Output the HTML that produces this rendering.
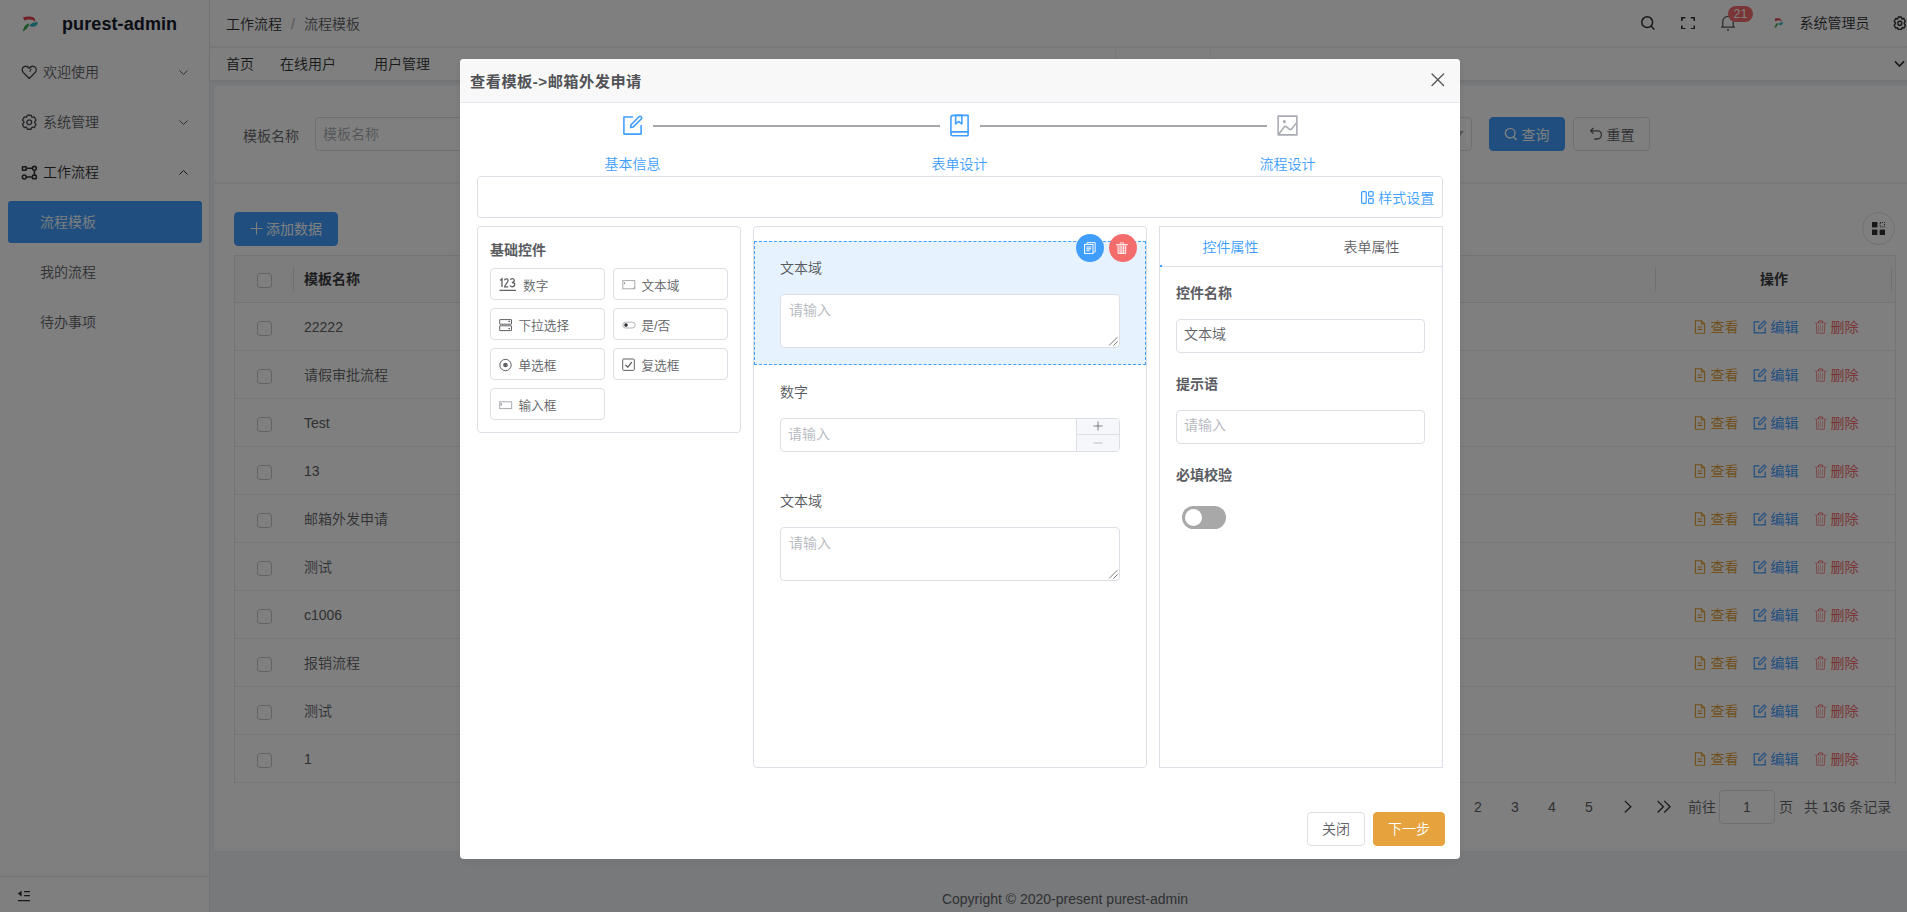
<!DOCTYPE html>
<html lang="zh-CN">
<head>
<meta charset="utf-8">
<title>purest-admin</title>
<style>
*{box-sizing:border-box;margin:0;padding:0}
html,body{width:1907px;height:912px;overflow:hidden;background:#f0f2f5}
body{font-family:"Liberation Sans","Noto Sans CJK SC",sans-serif;font-weight:350;font-size:14px;color:#303133;position:relative}
.abs{position:absolute}
svg{display:block}
/* ---------- sidebar ---------- */
#side{position:absolute;left:0;top:0;width:210px;height:912px;background:#fff;border-right:1px solid #e4e7ed}
#logo{position:absolute;left:0;top:0;width:210px;height:48px}
#logo .t{position:absolute;left:62px;top:12px;font-size:18px;font-weight:bold;color:#161a2c;letter-spacing:0.1px;line-height:24px}
.mi{position:absolute;left:0;width:210px;height:50px;line-height:50px;font-size:14px;color:#606266}
.mi .ic{position:absolute;left:21px;top:16.5px;width:16.5px;height:16.5px}
.mi .tx{position:absolute;left:43px;top:0}
.mi .ar{position:absolute;left:177.7px;top:19.6px;width:11px;height:11px}
.smi{position:absolute;left:40px;font-size:14px;color:#606266;line-height:20px}
#act{position:absolute;left:8px;top:201px;width:194px;height:42px;background:#409eff;border-radius:3px}
#collapse{position:absolute;left:0;top:876px;width:209px;height:36px;border-top:1px solid #e4e8f0;box-shadow:0 -1px 2px rgba(0,30,90,.04)}
/* ---------- header ---------- */
#hdr{position:absolute;left:210px;top:0;width:1697px;height:47px;background:#fff;border-bottom:1px solid #eeeeef}
#bc{position:absolute;left:16px;top:14px;font-size:14px;line-height:20px;color:#303133}
#bc .s{color:#a8abb2;margin:0 9px 0 9px}
#bc .l{color:#606266}
#tabs{position:absolute;left:210px;top:48px;width:1697px;height:33px;background:#fff;border-bottom:1px solid #e6e8ee;box-shadow:0 1px 2px rgba(0,20,60,.06)}
#tabs span{position:absolute;top:6px;font-size:14px;line-height:20px;color:#303133;white-space:nowrap}
/* ---------- cards ---------- */
.card{position:absolute;background:#fff;border-radius:4px}
.card>.in{position:absolute;left:0;width:1700px;height:0}
.btn{position:absolute;height:33px;border-radius:4px;font-size:14px;line-height:31px;border:1px solid #dcdfe6;background:#fff;color:#606266;white-space:nowrap}
.btn.pri{background:#409eff;border-color:#409eff;color:#fff;font-weight:400}
.cb{position:absolute;width:15px;height:15px;border:1px solid #c4c8d0;border-radius:3px;background:#fff}
.row{position:absolute;left:0;width:1660px;height:48px;border-bottom:1px solid #ececee}
.row .nm{position:absolute;left:69px;top:14px;line-height:20px;font-size:14px;color:#606266}
.row .cb{left:21.5px;top:18px}
.ops{position:absolute;left:1457.5px;top:14px;height:20px;font-size:14px;line-height:20px;white-space:nowrap}
.ops i{position:absolute;top:3px;width:14px;height:14px;font-style:normal}
.ops b{position:absolute;top:0;font-weight:normal}
.c-w{color:#e6a23c}.c-p{color:#409eff}.c-d{color:#f56c6c}
#pg{position:absolute;font-size:14px;color:#606266}
#pg span{position:absolute;top:0;line-height:20px;white-space:nowrap}
#foot{position:absolute;left:210px;top:890px;width:1710px;text-align:center;font-size:14px;color:#606368;line-height:18px}
#mask{position:absolute;left:0;top:0;width:1907px;height:912px;background:rgba(0,0,0,.5)}
#dlg{position:absolute;left:460px;top:59px;width:1000px;height:800px;background:#fff;border-radius:4px;box-shadow:0 2px 8px rgba(0,0,0,.06)}
#dh{position:absolute;left:0;top:0;width:1000px;height:44px;background:#f8f8f8;border-bottom:1px solid #e3e6ee;border-radius:4px 4px 0 0}
#dh .t{position:absolute;left:10px;top:12px;font-size:15.2px;font-weight:bold;color:#505256;line-height:22px;letter-spacing:.5px}
.st{position:absolute;top:96px;margin-left:.4px;width:120px;text-align:center;font-size:14px;line-height:18px;color:#409eff}
.ln{position:absolute;top:66px;height:2px;background:#a4a7ae}
.box{position:absolute;border:1px solid #dcdfe6;border-radius:4px;background:#fff}
.wi{position:absolute;width:115px;height:32px;border:1px solid #dcdfe6;border-radius:4px;font-size:12.7px;color:#606266;line-height:29px}
.wi svg{position:absolute;left:8px;top:9px}
.wi span{position:absolute;left:27.4px;top:2.5px;white-space:nowrap}
.fl{position:absolute;font-size:14px;color:#56585c;line-height:18px;white-space:nowrap}
.ph{position:absolute;font-size:14px;color:#b4b7bd;margin-top:.3px;line-height:18px;white-space:nowrap}
.lb{position:absolute;font-size:14px;font-weight:bold;color:#5a5c61;line-height:18px;white-space:nowrap}
.inp{position:absolute;border:1px solid #dcdfe6;border-radius:4px;background:#fff}
</style>
</head>
<body>
<!-- ================= SIDEBAR ================= -->
<div id="side">
  <div id="logo">
    <svg class="abs" style="left:22px;top:16px" width="17" height="16" viewBox="0 0 17 16">
      <path d="M1 1.2 C5 0.2 9.5 0.2 11.6 1.6 C13.2 2.8 13.6 4.6 13.2 6.2 C12.4 4.2 10 3.4 6.8 3.6 C5 3.8 3.2 4.2 2.2 4.6 Z" fill="#e0474c"/>
      <path d="M7.2 9.6 C9.2 7 12.6 5.8 16 6.4 C15.6 8.8 13.6 10.6 11 10.8 C9.6 10.9 8.2 10.4 7.2 9.6 Z" fill="#2fb4c4"/>
      <path d="M1 15.4 C1.2 11.6 3.2 8.4 7.4 7.2 C6.8 10.4 5 13.6 1 15.4 Z" fill="#3faa4d"/>
    </svg>
    <div class="t">purest-admin</div>
  </div>
  <div class="mi" style="top:47px">
    <svg class="ic" viewBox="0 0 16 16" fill="none" stroke="#4a4d55" stroke-width="1.3" stroke-linejoin="round"><path d="M8 14 L2.2 8.2 C0.6 6.4 1 3.6 3 2.6 C4.8 1.8 6.8 2.4 8 4.2 C9.2 2.4 11.2 1.8 13 2.6 C15 3.6 15.4 6.4 13.8 8.2 Z"/><path d="M10 4.6 C9.2 5.6 8.8 6.4 8.6 7.6" stroke-width="1"/></svg>
    <span class="tx">欢迎使用</span>
    <svg class="ar" viewBox="0 0 11 11" fill="none" stroke="#606266" stroke-width="1"><path d="M1.5 3.5 L5.5 7.5 L9.5 3.5"/></svg>
  </div>
  <div class="mi" style="top:97px">
    <svg class="ic" viewBox="0 0 16 16" fill="none" stroke="#4a4d55" stroke-width="1.3" stroke-linejoin="round"><path d="M6.2 1.2 H9.8 L10.6 3.2 L12.8 2.8 L14.6 5.8 L13.2 7.6 V8.4 L14.6 10.2 L12.8 13.2 L10.6 12.8 L9.8 14.8 H6.2 L5.4 12.8 L3.2 13.2 L1.4 10.2 L2.8 8.4 V7.6 L1.4 5.8 L3.2 2.8 L5.4 3.2 Z"/><circle cx="8" cy="8" r="2.3"/></svg>
    <span class="tx">系统管理</span>
    <svg class="ar" viewBox="0 0 11 11" fill="none" stroke="#606266" stroke-width="1"><path d="M1.5 3.5 L5.5 7.5 L9.5 3.5"/></svg>
  </div>
  <div class="mi" style="top:147px;color:#303133">
    <svg class="ic" viewBox="0 0 16 16" fill="none" stroke="#303133" stroke-width="1.5"><rect x="1.4" y="2.6" width="3.6" height="3.4" rx=".4"/><circle cx="13" cy="4.2" r="1.9"/><circle cx="3.2" cy="12.6" r="1.9"/><rect x="11.2" y="10.9" width="3.6" height="3.4" rx=".4"/><path d="M5 4.2 H11.1 M5.1 12.6 H11.2 M13 6.1 V10.9"/></svg>
    <span class="tx">工作流程</span>
    <svg class="ar" viewBox="0 0 11 11" fill="none" stroke="#303133" stroke-width="1"><path d="M1.5 7.5 L5.5 3.5 L9.5 7.5"/></svg>
  </div>
  <div id="act"></div>
  <div class="smi" style="top:212px;color:#fff">流程模板</div>
  <div class="smi" style="top:262px">我的流程</div>
  <div class="smi" style="top:312px">待办事项</div>
  <div id="collapse">
    <svg class="abs" style="left:17px;top:13px" width="14" height="13" viewBox="0 0 14 13" fill="none" stroke="#303133" stroke-width="1.4"><path d="M7 1.6 H13 M7 5.6 H13 M1 10.6 H13"/><path d="M4.6 0.8 V6.4 L0.8 3.6 Z" fill="#303133" stroke="none"/></svg>
  </div>
</div>

<!-- ================= HEADER ================= -->
<div id="hdr">
  <div id="bc"><span>工作流程</span><span class="s">/</span><span class="l">流程模板</span></div>
  <svg class="abs" style="left:1430px;top:15px" width="16" height="16" viewBox="0 0 16 16" fill="none" stroke="#303133" stroke-width="1.5"><circle cx="7.2" cy="7.2" r="5.4"/><path d="M11.2 11.2 L14.4 14.6"/></svg>
  <svg class="abs" style="left:1471px;top:16.8px" width="14.2" height="12.4" viewBox="0 0 14 14" preserveAspectRatio="none" fill="none" stroke="#303133" stroke-width="1.6"><path d="M0.8 4.4 V0.8 H4.4 M9.6 0.8 H13.2 V4.4 M13.2 9.6 V13.2 H9.6 M4.4 13.2 H0.8 V9.6"/></svg>
  <svg class="abs" style="left:1510px;top:14px" width="16" height="18" viewBox="0 0 16 18" fill="none" stroke="#5a5d63" stroke-width="1.3"><path d="M2.8 13 V8 C2.8 4.6 5 2.4 8 2.4 C11 2.4 13.2 4.6 13.2 8 V13 M1 13.2 H15 M7 16 H9"/></svg>
  <div class="abs" style="left:1518px;top:6px;width:25px;height:16px;border-radius:8px;background:#f56c6c;color:#fff;font-size:12.5px;line-height:16px;text-align:center;font-weight:400">21</div>
  <svg class="abs" style="left:1564.4px;top:18.2px" width="9.8" height="10.6" viewBox="0 0 17 16" preserveAspectRatio="none">
    <path d="M1 1.2 C5 0.2 9.5 0.2 11.6 1.6 C13.2 2.8 13.6 4.6 13.2 6.2 C12.4 4.2 10 3.4 6.8 3.6 C5 3.8 3.2 4.2 2.2 4.6 Z" fill="#e0474c"/>
    <path d="M7.2 9.6 C9.2 7 12.6 5.8 16 6.4 C15.6 8.8 13.6 10.6 11 10.8 C9.6 10.9 8.2 10.4 7.2 9.6 Z" fill="#2fb4c4"/>
    <path d="M1 15.4 C1.2 11.6 3.2 8.4 7.4 7.2 C6.8 10.4 5 13.6 1 15.4 Z" fill="#3faa4d"/>
  </svg>
  <div class="abs" style="left:1589.5px;top:13px;font-size:14px;line-height:20px;color:#303133;white-space:nowrap">系统管理员</div>
  <svg class="abs" style="left:1683px;top:15.6px" width="13.6" height="14.6" viewBox="0 0 16 16" preserveAspectRatio="none" fill="none" stroke="#303133" stroke-width="1.6" stroke-linejoin="round"><path d="M6.2 1.2 H9.8 L10.6 3.2 L12.8 2.8 L14.6 5.8 L13.2 7.6 V8.4 L14.6 10.2 L12.8 13.2 L10.6 12.8 L9.8 14.8 H6.2 L5.4 12.8 L3.2 13.2 L1.4 10.2 L2.8 8.4 V7.6 L1.4 5.8 L3.2 2.8 L5.4 3.2 Z"/><circle cx="8" cy="8" r="2.3"/></svg>
</div>
<div id="tabs">
  <span style="left:16px">首页</span>
  <span style="left:70px">在线用户</span>
  <span style="left:164px">用户管理</span>
  <span style="left:258px;top:8px">角色管理</span>
  <span style="left:352px;top:8px">菜单管理</span>
  <span style="left:446px;top:8px">组织管理</span>
  <span style="left:540px;top:8px">配置管理</span>
  <span style="left:634px;top:8px">通知公告</span>
  <span style="left:728px;top:8px">系统文件</span>
  <span style="left:822px;top:8px">请求日志</span>
  <span style="left:916px;top:8px;color:#409eff">流程模板</span>
  <div class="abs" style="left:905px;top:0;width:96px;height:32px;border-left:1px solid #eef0f3;border-right:1px solid #eef0f3"></div>
  <svg class="abs" style="left:1684px;top:12px" width="11" height="8" viewBox="0 0 11 8" fill="none" stroke="#303133" stroke-width="1.6"><path d="M1 1.4 L5.5 6 L10 1.4"/></svg>
</div>

<!-- ================= SEARCH CARD ================= -->
<div class="card" style="left:214px;top:86px;width:1700px;height:96px"><div class="in" style="top:1px">
  <div class="abs" style="left:29px;top:39px;line-height:20px;color:#606266">模板名称</div>
  <div class="abs" style="left:101px;top:30px;width:240px;height:34px;border:1px solid #dcdfe6;border-radius:4px"><span class="abs" style="left:7px;top:6px;line-height:20px;color:#a8abb2">模板名称</span></div>
  <div class="abs" style="left:1060px;top:30px;width:198px;height:34px;border:1px solid #dcdfe6;border-radius:4px"><span class="abs" style="right:7px;top:13px;width:0;height:0;border:5px solid transparent;border-top:6px solid #a8abb2"></span></div>
  <div class="btn pri" style="left:1275px;top:30px;width:76px;height:34px;line-height:32px">
    <svg class="abs" style="left:14.3px;top:8.5px" width="14" height="14" viewBox="0 0 14 14" fill="none" stroke="#fff" stroke-width="1.4"><circle cx="6.2" cy="6.2" r="4.8"/><path d="M9.6 9.8 L12.4 13"/></svg>
    <span class="abs" style="left:31.6px;top:.6px">查询</span>
  </div>
  <div class="btn" style="left:1359px;top:30px;width:77px;height:34px;line-height:32px">
    <svg class="abs" style="left:14.6px;top:8.5px" width="14" height="14" viewBox="0 0 14 14" fill="none" stroke="#606266" stroke-width="1.3"><path d="M4.4 1 L1.6 3.8 L4.4 6.6 M1.8 3.8 H8.4 C10.8 3.8 12.4 5.6 12.4 7.8 C12.4 10.2 10.6 12 8.2 12 H5.4"/></svg>
    <span class="abs" style="left:32.4px;top:.6px">重置</span>
  </div>
</div></div>

<!-- ================= TABLE CARD ================= -->
<div class="card" style="left:214px;top:184px;width:1700px;height:667px"><div class="in" style="top:2px">
  <div class="btn pri" style="left:20px;top:26px;width:104px;height:34px;line-height:33px">
    <svg class="abs" style="left:15px;top:9px" width="13" height="13" viewBox="0 0 13 13" fill="none" stroke="#fff" stroke-width="1.1"><path d="M6.5 0.5 V12.5 M0.5 6.5 H12.5"/></svg>
    <span class="abs" style="left:31px;top:0">添加数据</span>
  </div>
  <div class="abs" style="left:1648px;top:26px;width:33px;height:33px;border:1px solid #dcdfe6;border-radius:50%">
    <svg class="abs" style="left:9px;top:9px" width="13" height="13" viewBox="0 0 13 13"><rect x="0" y="0" width="5.4" height="5.4" fill="#303133"/><rect x="0" y="7.6" width="5.4" height="5.4" fill="#303133"/><rect x="7.6" y="7.6" width="5.4" height="5.4" fill="#303133"/><rect x="8.1" y="0.5" width="4.4" height="4.4" fill="none" stroke="#303133" stroke-width="1" stroke-dasharray="1 1"/></svg>
  </div>
  <!-- table -->
  <div class="abs" style="left:20px;top:69px;width:1662px;height:529px;border:1px solid #e6e8ec;border-bottom:none">
    <div class="abs" style="left:0;top:0;width:1660px;height:47px;background:#fafafa;border-bottom:1px solid #e6e8ec">
      <div class="cb" style="left:22px;top:17px"></div>
      <div class="abs" style="left:58px;top:11px;width:1px;height:24px;background:#dcdfe6"></div>
      <div class="abs" style="left:69px;top:13px;line-height:20px;font-weight:bold;color:#3a3c40">模板名称</div>
      <div class="abs" style="left:1420px;top:11px;width:1px;height:24px;background:#dcdfe6"></div>
      <div class="abs" style="left:1656px;top:11px;width:1px;height:24px;background:#dcdfe6"></div>
      <div class="abs" style="left:1421px;top:13px;width:236px;text-align:center;line-height:20px;font-weight:bold;color:#3a3c40">操作</div>
    </div>
    <div id="rows">
    <div class="row" style="top:47px"><div class="cb"></div><div class="nm">22222</div>
      <div class="ops"><i style="left:0"><svg width="14" height="14" viewBox="0 0 14 14" fill="none" stroke="#e6a23c" stroke-width="1.1"><path d="M2.4 0.8 H8.6 L11.6 3.8 V13.2 H2.4 Z M8.4 1 V4 H11.4 M4.6 7 H9.4 M4.6 9.4 H9.4"/></svg></i><b class="c-w" style="left:18px">查看</b><i style="left:60px"><svg width="14" height="14" viewBox="0 0 14 14" fill="none" stroke="#409eff" stroke-width="1.2"><path d="M6.4 1.8 H1.2 V12.8 H12.2 V7.4"/><path d="M5.6 8.6 L6 6.4 L11.2 1 L13 2.8 L7.8 8.2 Z"/></svg></i><b class="c-p" style="left:78px">编辑</b><i style="left:121px"><svg width="14" height="14" viewBox="0 0 14 14" fill="none" stroke="#f56c6c"><path d="M0.6 3 H12.6" stroke-width=".9" opacity=".7"/><path d="M4.6 2.8 V1 H8.6 V2.8" stroke-width="1"/><path d="M2.4 3.2 L2.8 13.2 H10.4 L10.8 3.2" stroke-width=".9" opacity=".8"/><path d="M4.6 5 V11.4 M6.6 5 V11.4 M8.6 5 V11.4" stroke-width=".7" opacity=".75"/></svg></i><b class="c-d" style="left:138px">删除</b></div></div>
    <div class="row" style="top:95px"><div class="cb"></div><div class="nm">请假审批流程</div>
      <div class="ops"><i style="left:0"><svg width="14" height="14" viewBox="0 0 14 14" fill="none" stroke="#e6a23c" stroke-width="1.1"><path d="M2.4 0.8 H8.6 L11.6 3.8 V13.2 H2.4 Z M8.4 1 V4 H11.4 M4.6 7 H9.4 M4.6 9.4 H9.4"/></svg></i><b class="c-w" style="left:18px">查看</b><i style="left:60px"><svg width="14" height="14" viewBox="0 0 14 14" fill="none" stroke="#409eff" stroke-width="1.2"><path d="M6.4 1.8 H1.2 V12.8 H12.2 V7.4"/><path d="M5.6 8.6 L6 6.4 L11.2 1 L13 2.8 L7.8 8.2 Z"/></svg></i><b class="c-p" style="left:78px">编辑</b><i style="left:121px"><svg width="14" height="14" viewBox="0 0 14 14" fill="none" stroke="#f56c6c"><path d="M0.6 3 H12.6" stroke-width=".9" opacity=".7"/><path d="M4.6 2.8 V1 H8.6 V2.8" stroke-width="1"/><path d="M2.4 3.2 L2.8 13.2 H10.4 L10.8 3.2" stroke-width=".9" opacity=".8"/><path d="M4.6 5 V11.4 M6.6 5 V11.4 M8.6 5 V11.4" stroke-width=".7" opacity=".75"/></svg></i><b class="c-d" style="left:138px">删除</b></div></div>
    <div class="row" style="top:143px"><div class="cb"></div><div class="nm">Test</div>
      <div class="ops"><i style="left:0"><svg width="14" height="14" viewBox="0 0 14 14" fill="none" stroke="#e6a23c" stroke-width="1.1"><path d="M2.4 0.8 H8.6 L11.6 3.8 V13.2 H2.4 Z M8.4 1 V4 H11.4 M4.6 7 H9.4 M4.6 9.4 H9.4"/></svg></i><b class="c-w" style="left:18px">查看</b><i style="left:60px"><svg width="14" height="14" viewBox="0 0 14 14" fill="none" stroke="#409eff" stroke-width="1.2"><path d="M6.4 1.8 H1.2 V12.8 H12.2 V7.4"/><path d="M5.6 8.6 L6 6.4 L11.2 1 L13 2.8 L7.8 8.2 Z"/></svg></i><b class="c-p" style="left:78px">编辑</b><i style="left:121px"><svg width="14" height="14" viewBox="0 0 14 14" fill="none" stroke="#f56c6c"><path d="M0.6 3 H12.6" stroke-width=".9" opacity=".7"/><path d="M4.6 2.8 V1 H8.6 V2.8" stroke-width="1"/><path d="M2.4 3.2 L2.8 13.2 H10.4 L10.8 3.2" stroke-width=".9" opacity=".8"/><path d="M4.6 5 V11.4 M6.6 5 V11.4 M8.6 5 V11.4" stroke-width=".7" opacity=".75"/></svg></i><b class="c-d" style="left:138px">删除</b></div></div>
    <div class="row" style="top:191px"><div class="cb"></div><div class="nm">13</div>
      <div class="ops"><i style="left:0"><svg width="14" height="14" viewBox="0 0 14 14" fill="none" stroke="#e6a23c" stroke-width="1.1"><path d="M2.4 0.8 H8.6 L11.6 3.8 V13.2 H2.4 Z M8.4 1 V4 H11.4 M4.6 7 H9.4 M4.6 9.4 H9.4"/></svg></i><b class="c-w" style="left:18px">查看</b><i style="left:60px"><svg width="14" height="14" viewBox="0 0 14 14" fill="none" stroke="#409eff" stroke-width="1.2"><path d="M6.4 1.8 H1.2 V12.8 H12.2 V7.4"/><path d="M5.6 8.6 L6 6.4 L11.2 1 L13 2.8 L7.8 8.2 Z"/></svg></i><b class="c-p" style="left:78px">编辑</b><i style="left:121px"><svg width="14" height="14" viewBox="0 0 14 14" fill="none" stroke="#f56c6c"><path d="M0.6 3 H12.6" stroke-width=".9" opacity=".7"/><path d="M4.6 2.8 V1 H8.6 V2.8" stroke-width="1"/><path d="M2.4 3.2 L2.8 13.2 H10.4 L10.8 3.2" stroke-width=".9" opacity=".8"/><path d="M4.6 5 V11.4 M6.6 5 V11.4 M8.6 5 V11.4" stroke-width=".7" opacity=".75"/></svg></i><b class="c-d" style="left:138px">删除</b></div></div>
    <div class="row" style="top:239px"><div class="cb"></div><div class="nm">邮箱外发申请</div>
      <div class="ops"><i style="left:0"><svg width="14" height="14" viewBox="0 0 14 14" fill="none" stroke="#e6a23c" stroke-width="1.1"><path d="M2.4 0.8 H8.6 L11.6 3.8 V13.2 H2.4 Z M8.4 1 V4 H11.4 M4.6 7 H9.4 M4.6 9.4 H9.4"/></svg></i><b class="c-w" style="left:18px">查看</b><i style="left:60px"><svg width="14" height="14" viewBox="0 0 14 14" fill="none" stroke="#409eff" stroke-width="1.2"><path d="M6.4 1.8 H1.2 V12.8 H12.2 V7.4"/><path d="M5.6 8.6 L6 6.4 L11.2 1 L13 2.8 L7.8 8.2 Z"/></svg></i><b class="c-p" style="left:78px">编辑</b><i style="left:121px"><svg width="14" height="14" viewBox="0 0 14 14" fill="none" stroke="#f56c6c"><path d="M0.6 3 H12.6" stroke-width=".9" opacity=".7"/><path d="M4.6 2.8 V1 H8.6 V2.8" stroke-width="1"/><path d="M2.4 3.2 L2.8 13.2 H10.4 L10.8 3.2" stroke-width=".9" opacity=".8"/><path d="M4.6 5 V11.4 M6.6 5 V11.4 M8.6 5 V11.4" stroke-width=".7" opacity=".75"/></svg></i><b class="c-d" style="left:138px">删除</b></div></div>
    <div class="row" style="top:287px"><div class="cb"></div><div class="nm">测试</div>
      <div class="ops"><i style="left:0"><svg width="14" height="14" viewBox="0 0 14 14" fill="none" stroke="#e6a23c" stroke-width="1.1"><path d="M2.4 0.8 H8.6 L11.6 3.8 V13.2 H2.4 Z M8.4 1 V4 H11.4 M4.6 7 H9.4 M4.6 9.4 H9.4"/></svg></i><b class="c-w" style="left:18px">查看</b><i style="left:60px"><svg width="14" height="14" viewBox="0 0 14 14" fill="none" stroke="#409eff" stroke-width="1.2"><path d="M6.4 1.8 H1.2 V12.8 H12.2 V7.4"/><path d="M5.6 8.6 L6 6.4 L11.2 1 L13 2.8 L7.8 8.2 Z"/></svg></i><b class="c-p" style="left:78px">编辑</b><i style="left:121px"><svg width="14" height="14" viewBox="0 0 14 14" fill="none" stroke="#f56c6c"><path d="M0.6 3 H12.6" stroke-width=".9" opacity=".7"/><path d="M4.6 2.8 V1 H8.6 V2.8" stroke-width="1"/><path d="M2.4 3.2 L2.8 13.2 H10.4 L10.8 3.2" stroke-width=".9" opacity=".8"/><path d="M4.6 5 V11.4 M6.6 5 V11.4 M8.6 5 V11.4" stroke-width=".7" opacity=".75"/></svg></i><b class="c-d" style="left:138px">删除</b></div></div>
    <div class="row" style="top:335px"><div class="cb"></div><div class="nm">c1006</div>
      <div class="ops"><i style="left:0"><svg width="14" height="14" viewBox="0 0 14 14" fill="none" stroke="#e6a23c" stroke-width="1.1"><path d="M2.4 0.8 H8.6 L11.6 3.8 V13.2 H2.4 Z M8.4 1 V4 H11.4 M4.6 7 H9.4 M4.6 9.4 H9.4"/></svg></i><b class="c-w" style="left:18px">查看</b><i style="left:60px"><svg width="14" height="14" viewBox="0 0 14 14" fill="none" stroke="#409eff" stroke-width="1.2"><path d="M6.4 1.8 H1.2 V12.8 H12.2 V7.4"/><path d="M5.6 8.6 L6 6.4 L11.2 1 L13 2.8 L7.8 8.2 Z"/></svg></i><b class="c-p" style="left:78px">编辑</b><i style="left:121px"><svg width="14" height="14" viewBox="0 0 14 14" fill="none" stroke="#f56c6c"><path d="M0.6 3 H12.6" stroke-width=".9" opacity=".7"/><path d="M4.6 2.8 V1 H8.6 V2.8" stroke-width="1"/><path d="M2.4 3.2 L2.8 13.2 H10.4 L10.8 3.2" stroke-width=".9" opacity=".8"/><path d="M4.6 5 V11.4 M6.6 5 V11.4 M8.6 5 V11.4" stroke-width=".7" opacity=".75"/></svg></i><b class="c-d" style="left:138px">删除</b></div></div>
    <div class="row" style="top:383px"><div class="cb"></div><div class="nm">报销流程</div>
      <div class="ops"><i style="left:0"><svg width="14" height="14" viewBox="0 0 14 14" fill="none" stroke="#e6a23c" stroke-width="1.1"><path d="M2.4 0.8 H8.6 L11.6 3.8 V13.2 H2.4 Z M8.4 1 V4 H11.4 M4.6 7 H9.4 M4.6 9.4 H9.4"/></svg></i><b class="c-w" style="left:18px">查看</b><i style="left:60px"><svg width="14" height="14" viewBox="0 0 14 14" fill="none" stroke="#409eff" stroke-width="1.2"><path d="M6.4 1.8 H1.2 V12.8 H12.2 V7.4"/><path d="M5.6 8.6 L6 6.4 L11.2 1 L13 2.8 L7.8 8.2 Z"/></svg></i><b class="c-p" style="left:78px">编辑</b><i style="left:121px"><svg width="14" height="14" viewBox="0 0 14 14" fill="none" stroke="#f56c6c"><path d="M0.6 3 H12.6" stroke-width=".9" opacity=".7"/><path d="M4.6 2.8 V1 H8.6 V2.8" stroke-width="1"/><path d="M2.4 3.2 L2.8 13.2 H10.4 L10.8 3.2" stroke-width=".9" opacity=".8"/><path d="M4.6 5 V11.4 M6.6 5 V11.4 M8.6 5 V11.4" stroke-width=".7" opacity=".75"/></svg></i><b class="c-d" style="left:138px">删除</b></div></div>
    <div class="row" style="top:431px"><div class="cb"></div><div class="nm">测试</div>
      <div class="ops"><i style="left:0"><svg width="14" height="14" viewBox="0 0 14 14" fill="none" stroke="#e6a23c" stroke-width="1.1"><path d="M2.4 0.8 H8.6 L11.6 3.8 V13.2 H2.4 Z M8.4 1 V4 H11.4 M4.6 7 H9.4 M4.6 9.4 H9.4"/></svg></i><b class="c-w" style="left:18px">查看</b><i style="left:60px"><svg width="14" height="14" viewBox="0 0 14 14" fill="none" stroke="#409eff" stroke-width="1.2"><path d="M6.4 1.8 H1.2 V12.8 H12.2 V7.4"/><path d="M5.6 8.6 L6 6.4 L11.2 1 L13 2.8 L7.8 8.2 Z"/></svg></i><b class="c-p" style="left:78px">编辑</b><i style="left:121px"><svg width="14" height="14" viewBox="0 0 14 14" fill="none" stroke="#f56c6c"><path d="M0.6 3 H12.6" stroke-width=".9" opacity=".7"/><path d="M4.6 2.8 V1 H8.6 V2.8" stroke-width="1"/><path d="M2.4 3.2 L2.8 13.2 H10.4 L10.8 3.2" stroke-width=".9" opacity=".8"/><path d="M4.6 5 V11.4 M6.6 5 V11.4 M8.6 5 V11.4" stroke-width=".7" opacity=".75"/></svg></i><b class="c-d" style="left:138px">删除</b></div></div>
    <div class="row" style="top:479px"><div class="cb"></div><div class="nm">1</div>
      <div class="ops"><i style="left:0"><svg width="14" height="14" viewBox="0 0 14 14" fill="none" stroke="#e6a23c" stroke-width="1.1"><path d="M2.4 0.8 H8.6 L11.6 3.8 V13.2 H2.4 Z M8.4 1 V4 H11.4 M4.6 7 H9.4 M4.6 9.4 H9.4"/></svg></i><b class="c-w" style="left:18px">查看</b><i style="left:60px"><svg width="14" height="14" viewBox="0 0 14 14" fill="none" stroke="#409eff" stroke-width="1.2"><path d="M6.4 1.8 H1.2 V12.8 H12.2 V7.4"/><path d="M5.6 8.6 L6 6.4 L11.2 1 L13 2.8 L7.8 8.2 Z"/></svg></i><b class="c-p" style="left:78px">编辑</b><i style="left:121px"><svg width="14" height="14" viewBox="0 0 14 14" fill="none" stroke="#f56c6c"><path d="M0.6 3 H12.6" stroke-width=".9" opacity=".7"/><path d="M4.6 2.8 V1 H8.6 V2.8" stroke-width="1"/><path d="M2.4 3.2 L2.8 13.2 H10.4 L10.8 3.2" stroke-width=".9" opacity=".8"/><path d="M4.6 5 V11.4 M6.6 5 V11.4 M8.6 5 V11.4" stroke-width=".7" opacity=".75"/></svg></i><b class="c-d" style="left:138px">删除</b></div></div>
    </div>
  </div>
  <!-- pagination -->
  <div id="pg" style="left:0;top:611px;width:1700px;height:20px">
    <span style="left:1260px">2</span><span style="left:1297px">3</span><span style="left:1334px">4</span><span style="left:1371px">5</span>
    <svg class="abs" style="left:1406.5px;top:3px" width="13.4" height="13.4" viewBox="0 0 12 12" fill="none" stroke="#303133" stroke-width="1.15"><path d="M3.4 0.8 L8.8 6 L3.4 11.2"/></svg>
    <svg class="abs" style="left:1441.5px;top:3px" width="15.6" height="13.4" viewBox="0 0 14 12" fill="none" stroke="#303133" stroke-width="1.15"><path d="M1.4 0.8 L6.6 6 L1.4 11.2 M7.4 0.8 L12.6 6 L7.4 11.2"/></svg>
    <span style="left:1474px">前往</span>
    <div class="abs" style="left:1505px;top:-7px;width:56px;height:34px;border:1px solid #dcdfe6;border-radius:4px;text-align:center;line-height:32px;color:#606266">1</div>
    <span style="left:1565px">页</span>
    <span style="left:1590px">共 136 条记录</span>
  </div>
</div></div>
<div id="foot">Copyright © 2020-present purest-admin</div>

<div id="mask"></div>

<div id="dlg">
  <div id="dh">
    <div class="t">查看模板-&gt;邮箱外发申请</div>
    <svg class="abs" style="left:966.7px;top:9.6px" width="21.6" height="21.6" viewBox="0 0 1024 1024" fill="#55575b"><path d="M764.288 214.592 512 466.88 259.712 214.592a31.936 31.936 0 0 0-45.12 45.12L466.752 512 214.528 764.224a31.936 31.936 0 1 0 45.12 45.184L512 557.184l252.288 252.288a31.936 31.936 0 0 0 45.12-45.12L557.12 512.064l252.288-252.352a31.936 31.936 0 1 0-45.12-45.184z"/></svg>
  </div>
  <!-- steps -->
  <svg class="abs" style="left:160px;top:54px" width="25" height="25" viewBox="0 0 1024 1024" fill="#409eff"><path d="M832 512a32 32 0 1 1 64 0v352a32 32 0 0 1-32 32H160a32 32 0 0 1-32-32V160a32 32 0 0 1 32-32h352a32 32 0 0 1 0 64H192v640h640z"/><path d="m469.952 554.24 52.8-7.552L847.104 222.4a32 32 0 1 0-45.248-45.248L477.44 501.44l-7.552 52.8zm422.4-422.4a96 96 0 0 1 0 135.808l-331.84 331.84a32 32 0 0 1-18.112 9.088L436.8 623.68a32 32 0 0 1-36.224-36.224l15.104-105.6a32 32 0 0 1 9.024-18.112l331.904-331.84a96 96 0 0 1 135.744 0z"/></svg>
  <div class="ln" style="left:193px;width:287px"></div>
  <svg class="abs" style="left:487px;top:54px" width="25" height="25" viewBox="0 0 1024 1024" fill="#409eff"><path d="M192 736h640V128H256a64 64 0 0 0-64 64zm64-672h608a32 32 0 0 1 32 32v672a32 32 0 0 1-32 32H160l-32 57.536V192A128 128 0 0 1 256 64"/><path d="M240 800a48 48 0 1 0 0 96h592v-96zm0-64h656v160a64 64 0 0 1-64 64H240a112 112 0 0 1 0-224m144-608v250.88l96-76.8 96 76.8V128zm-64-64h320v381.44a32 32 0 0 1-51.968 24.96L480 384l-108.032 86.4A32 32 0 0 1 320 445.44z"/></svg>
  <div class="ln" style="left:520px;width:287px"></div>
  <svg class="abs" style="left:815px;top:54px" width="25" height="25" viewBox="0 0 1024 1024" fill="#a8abb2"><path d="M160 160v704h704V160zm-32-64h768a32 32 0 0 1 32 32v768a32 32 0 0 1-32 32H128a32 32 0 0 1-32-32V128a32 32 0 0 1 32-32"/><path d="M384 288q64 0 64 64t-64 64q-64 0-64-64t64-64M185.408 876.992l-50.816-38.912L350.72 556.032a96 96 0 0 1 134.592-17.856l1.856 1.472 122.88 99.136a32 32 0 0 0 44.992-4.864l216-269.888 49.92 39.936-215.808 269.824-.256.32a96 96 0 0 1-135.04 14.464l-122.88-99.072-.64-.512a32 32 0 0 0-44.8 5.952z"/></svg>
  <div class="st" style="left:112px">基本信息</div>
  <div class="st" style="left:439px">表单设计</div>
  <div class="st" style="left:767px">流程设计</div>

  <!-- toolbar -->
  <div class="box" style="left:17px;top:117px;width:966px;height:42px">
    <svg class="abs" style="left:883.3px;top:14px" width="13" height="13" viewBox="0 0 13 13" fill="none" stroke="#409eff" stroke-width="1.2"><rect x="0.6" y="0.6" width="4.6" height="11.8" rx="1"/><rect x="7.6" y="0.6" width="4.6" height="4.6" rx="1"/><rect x="7.6" y="7.6" width="4.6" height="4.8" rx="1"/></svg>
    <div class="abs" style="left:900.2px;top:11px;font-size:14px;line-height:20px;color:#409eff;white-space:nowrap">样式设置</div>
  </div>

  <!-- left panel -->
  <div class="box" style="left:17px;top:167px;width:264px;height:207px">
    <div class="lb" style="left:12px;top:14px">基础控件</div>
    <div class="wi" style="left:12px;top:41px"><svg width="18" height="14.8" viewBox="0 0 17 14" fill="none" stroke="#606266" stroke-width="1.25" style="top:8px"><path d="M1 3.2 L2.8 1.6 V9.4 M5.2 3.2 C5.4 1.4 8.6 1.2 8.6 3.4 C8.6 5 5.4 7.4 5.2 9.4 H8.8 M10.8 2.6 C11.2 1 14.6 1.2 14.4 3.4 C14.4 4.8 13 5.2 12.2 5.2 C13.2 5.2 14.8 5.6 14.8 7.2 C14.8 9.8 10.8 9.8 10.6 7.8 M0.4 12.6 H16"/></svg><span style="left:32px">数字</span></div>
    <div class="wi" style="left:135px;top:41px"><svg width="14" height="14" viewBox="0 0 14 14" fill="none" stroke="#a6a9ae" stroke-width="1"><rect x="0.8" y="2.6" width="12" height="8.2"/><path d="M2.4 4.2 V6.2 M11.4 10.4 L12.4 9.4" stroke="#707378" stroke-width=".9"/></svg><span>文本域</span></div>
    <div class="wi" style="left:12px;top:81px"><svg width="14" height="14" viewBox="0 0 14 14" fill="none" stroke="#606266" stroke-width="1"><rect x="0.7" y="1.6" width="11.8" height="4.6" rx=".3"/><rect x="0.7" y="7.8" width="11.8" height="4.8" rx=".3"/><path d="M9.4 3.4 H11 M9.4 10.6 H11" stroke-width="1.2"/></svg><span>下拉选择</span></div>
    <div class="wi" style="left:135px;top:81px"><svg width="14" height="14" viewBox="0 0 14 14" fill="none" stroke="#a8abb2" stroke-width=".9"><rect x="0.8" y="4.2" width="12.4" height="5.8" rx="2.9"/><circle cx="4" cy="7.1" r="1.8" fill="#303133" stroke="none"/></svg><span>是/否</span></div>
    <div class="wi" style="left:12px;top:121px"><svg width="14" height="14" viewBox="0 0 14 14" fill="none" stroke="#606266" stroke-width="1"><circle cx="6.5" cy="7" r="5.7"/><circle cx="6.5" cy="7" r="2.3" fill="#606266" stroke="none"/></svg><span>单选框</span></div>
    <div class="wi" style="left:135px;top:121px"><svg width="14" height="14" viewBox="0 0 14 14" fill="none" stroke="#606266" stroke-width="1"><rect x="0.7" y="1" width="11.6" height="11.4" rx=".8"/><path d="M3.4 6.8 L5.8 9.2 L9.8 4.2" stroke="#4a4c50" stroke-width="1.1"/></svg><span>复选框</span></div>
    <div class="wi" style="left:12px;top:161px"><svg width="14" height="14" viewBox="0 0 14 14" fill="none" stroke="#a6a9ae" stroke-width="1"><rect x="0.7" y="3.8" width="12" height="6.8"/><path d="M2.2 5 V7.6" stroke="#707378" stroke-width=".9"/></svg><span>输入框</span></div>
  </div>

  <!-- center panel -->
  <div class="box" style="left:293px;top:167px;width:394px;height:542px">
    <div class="abs" style="left:0;top:14px;width:392px;height:124px;background:#e6f3ff;border:1px dashed #409eff"></div>
    <div class="fl" style="left:26px;top:32px">文本域</div>
    <div class="inp" style="left:26px;top:67px;width:340px;height:54px"><span class="ph" style="left:8px;top:6px">请输入</span>
      <svg class="abs" style="right:1px;bottom:1px" width="10" height="10" viewBox="0 0 10 10" stroke="#555" stroke-width=".8" fill="none"><path d="M1.2 9.4 L9.4 1.2 M5.4 9.6 L9.6 5.4"/></svg></div>
    <div class="abs" style="left:322px;top:7px;width:28px;height:28px;border-radius:50%;background:#409eff">
      <svg class="abs" style="left:8px;top:8px" width="12" height="12" viewBox="0 0 12 12" fill="none" stroke="#fff" stroke-width="1"><path d="M3 2 V0.6 H11.2 V10 H9.4" opacity=".9"/><rect x="0.6" y="2.4" width="8.4" height="9.2"/><path d="M2.4 5 H7.2 M2.4 6.9 H7.2 M2.4 8.8 H5.6" stroke-width="1.1"/></svg></div>
    <div class="abs" style="left:355px;top:7px;width:28px;height:28px;border-radius:50%;background:#f56c6c">
      <svg class="abs" style="left:7.3px;top:8px" width="12" height="12" viewBox="0 0 12 12" fill="none" stroke="#fff" stroke-width="1"><path d="M0 2.7 H11.8" stroke-width="1"/><path d="M4.2 2.4 V0.8 H7.6 V2.4" stroke-width=".9" opacity=".85"/><path d="M2.1 3.4 V11.4 H9.7 V3.4" stroke-width="1"/><path d="M4.1 3.6 V11 M5.9 3.6 V11 M7.7 3.6 V11" stroke-width="1.1" opacity=".92"/></svg></div>

    <div class="fl" style="left:26px;top:156px">数字</div>
    <div class="inp" style="left:26px;top:191px;width:340px;height:34px;overflow:hidden"><span class="ph" style="left:7px;top:6.2px">请输入</span>
      <div class="abs" style="left:295px;top:0;width:43px;height:32px;background:#f5f7fa;border-left:1px solid #dcdfe6"></div>
      <div class="abs" style="left:296px;top:15px;width:42px;height:1px;background:#dcdfe6"></div>
      <svg class="abs" style="left:312px;top:2px" width="10" height="10" viewBox="0 0 10 10" stroke="#606266" stroke-width=".8" fill="none"><path d="M5 0.5 V9.5 M0.5 5 H9.5"/></svg>
      <svg class="abs" style="left:312px;top:19px" width="10" height="10" viewBox="0 0 10 10" stroke="#b0b3b9" stroke-width=".8" fill="none"><path d="M0.5 5 H9.5"/></svg>
    </div>
    <div class="fl" style="left:26px;top:265px">文本域</div>
    <div class="inp" style="left:26px;top:300px;width:340px;height:54px"><span class="ph" style="left:8px;top:6px">请输入</span>
      <svg class="abs" style="right:1px;bottom:1px" width="10" height="10" viewBox="0 0 10 10" stroke="#555" stroke-width=".8" fill="none"><path d="M1.2 9.4 L9.4 1.2 M5.4 9.6 L9.6 5.4"/></svg></div>
  </div>

  <!-- right panel -->
  <div class="box" style="left:699px;top:167px;width:284px;height:542px;border-radius:0">
    <div class="abs" style="left:0;top:39px;width:282px;height:1px;background:#dcdfe6"></div>
    <div class="abs" style="left:0;top:38px;width:2px;height:2px;background:#409eff"></div>
    <div class="abs" style="left:0;top:10px;width:141px;text-align:center;font-size:14px;line-height:20px;color:#409eff">控件属性</div>
    <div class="abs" style="left:141px;top:10px;width:141px;text-align:center;font-size:14px;line-height:20px;color:#5f6165">表单属性</div>
    <div class="lb" style="left:16px;top:57px">控件名称</div>
    <div class="inp" style="left:16px;top:92px;width:249px;height:34px"><span class="fl" style="left:7px;top:5.3px;color:#606266">文本域</span></div>
    <div class="lb" style="left:16px;top:148px">提示语</div>
    <div class="inp" style="left:16px;top:183px;width:249px;height:34px"><span class="ph" style="left:7px;top:5.2px">请输入</span></div>
    <div class="lb" style="left:16px;top:239px">必填校验</div>
    <div class="abs" style="left:22px;top:279px;width:44px;height:23px;border-radius:11.5px;background:#a8a8a8"><div class="abs" style="left:3px;top:3px;width:17px;height:17px;border-radius:50%;background:#fff"></div></div>
  </div>

  <!-- footer -->
  <div class="btn" style="left:847px;top:753px;width:58px;height:34px;text-align:center;line-height:32px;color:#606266">关闭</div>
  <div class="btn" style="left:913px;top:753px;width:72px;height:34px;text-align:center;line-height:32px;background:#e6a23c;border-color:#e6a23c;color:#fff">下一步</div>
</div>


</body>
</html>
